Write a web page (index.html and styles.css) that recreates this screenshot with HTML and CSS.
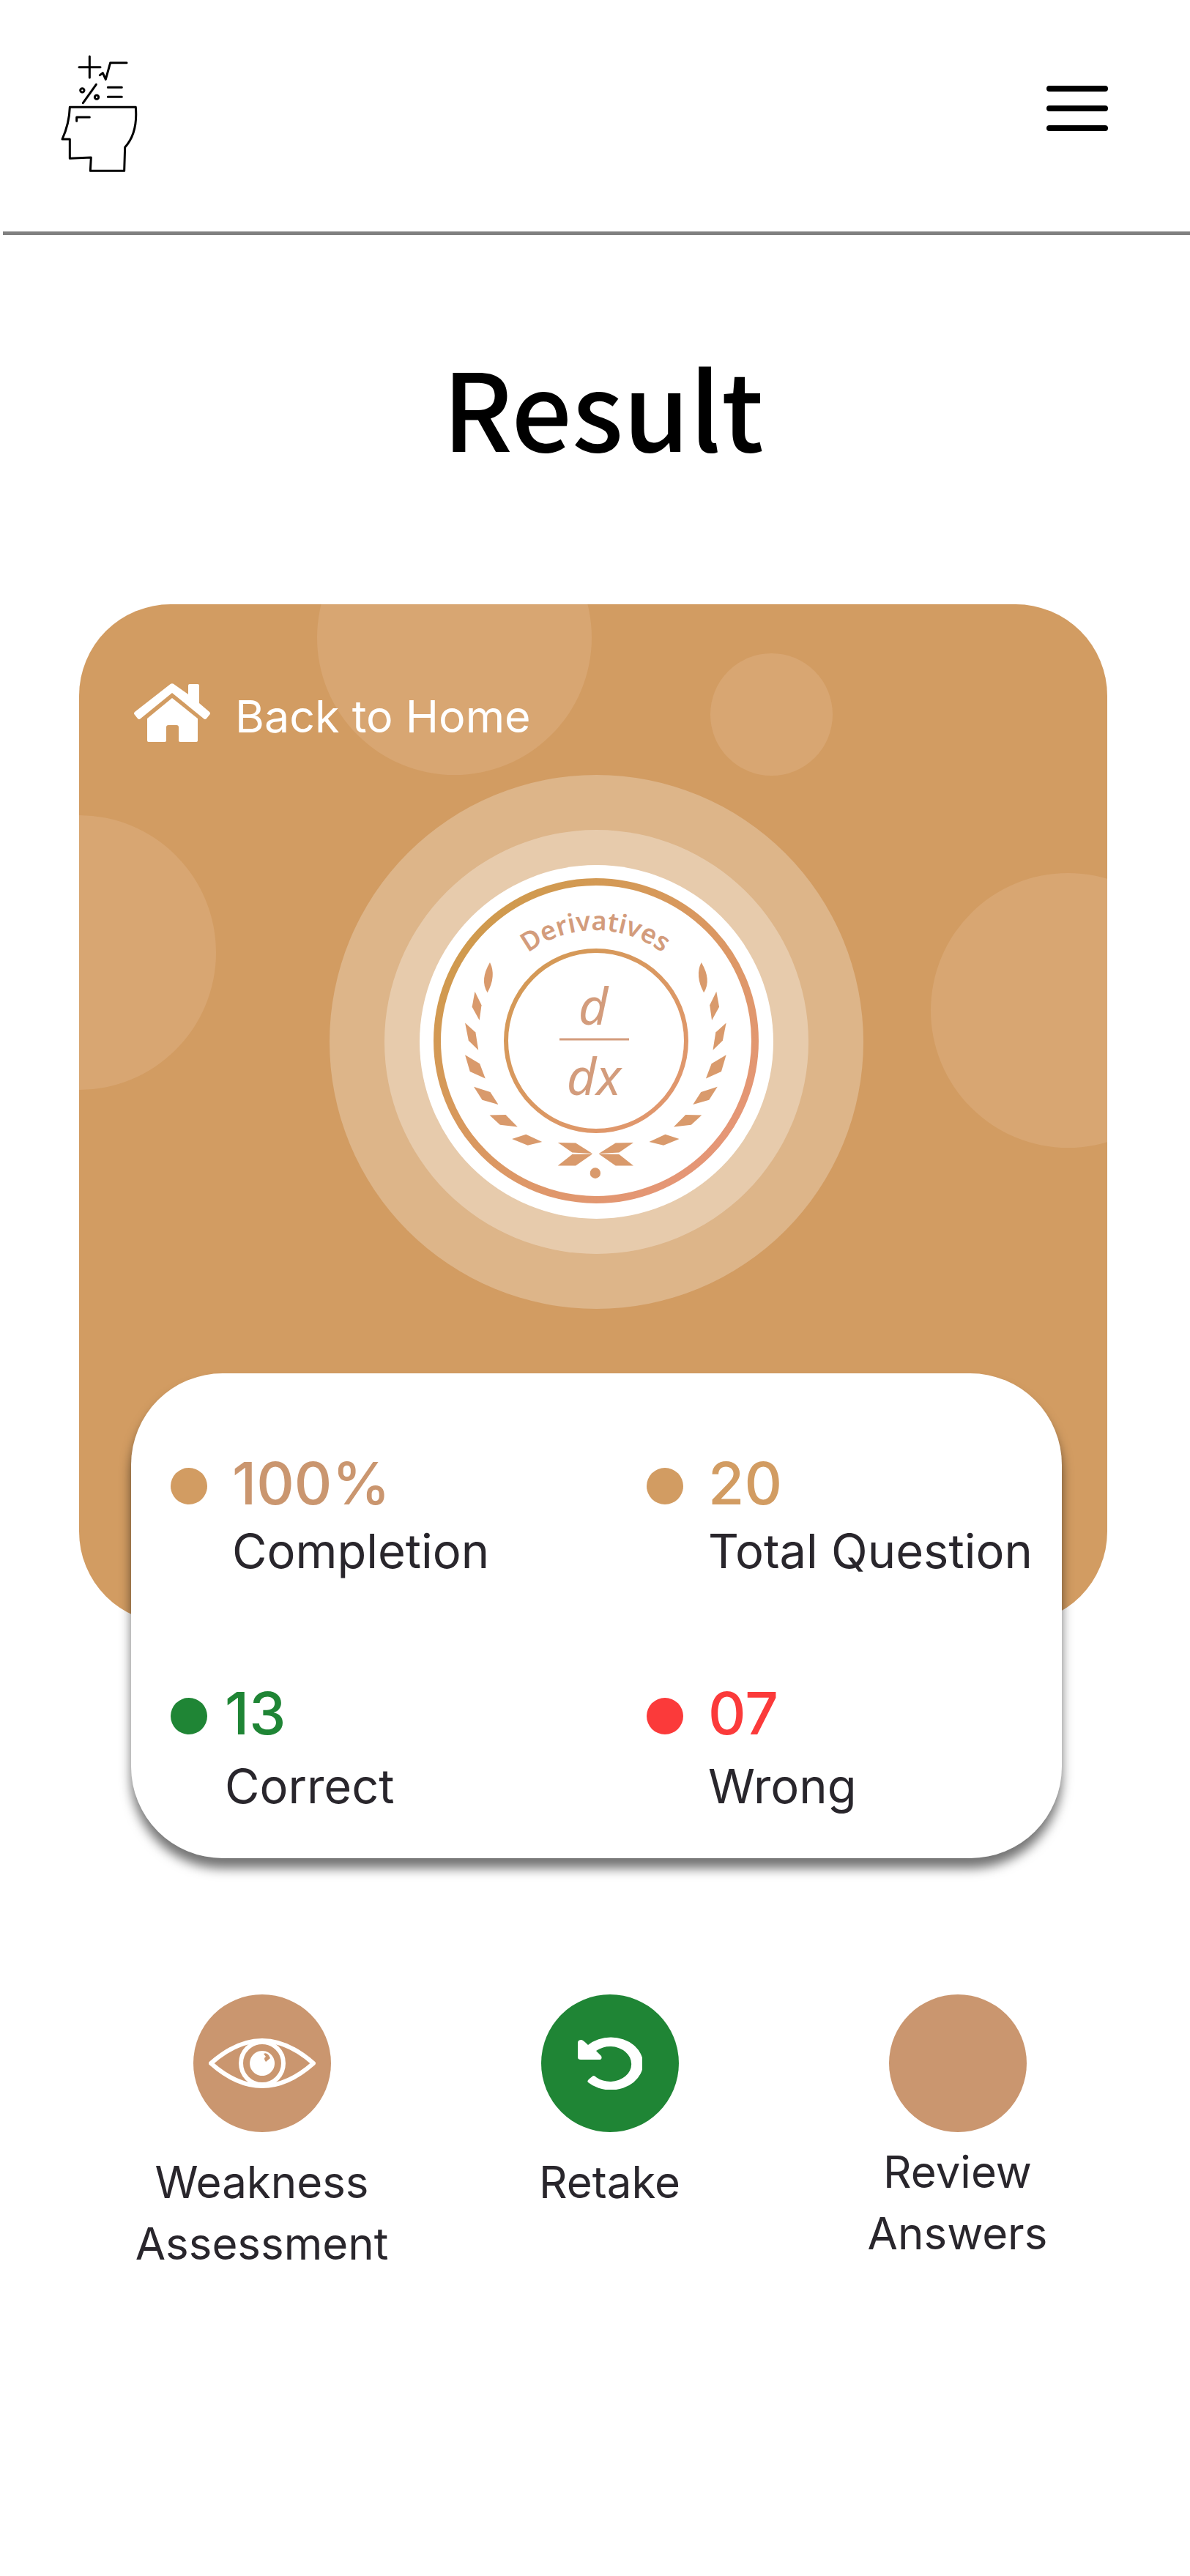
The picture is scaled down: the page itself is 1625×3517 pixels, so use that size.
FILE: index.html
```html
<!DOCTYPE html>
<html lang="en">
<head>
  <meta charset="utf-8">
  <meta name="viewport" content="width=device-width, initial-scale=1">
  <title>Result</title>
  <link rel="stylesheet" href="styles.css">
</head>
<body>
  <header class="topbar">
    <a class="logo" href="#" aria-label="Maths home">
      <svg width="105" height="160" viewBox="70 75 315 480" fill="none" stroke="#000" stroke-width="9" stroke-linecap="round" stroke-linejoin="round" aria-hidden="true">
        <path d="M188 81V168M145 125H232M230 158L242 149L254 175L273 107H340M215 196L161 272M263 208H320M263 247H320"/>
        <circle cx="158" cy="220" r="8"/>
        <circle cx="217" cy="248" r="8"/>
        <path d="M107 289H377Q386 395 333 453L330 550H191L194 495L107 499V420H76Q105 355 107 289Z"/>
        <path d="M135 346V330H188"/>
      </svg>
    </a>
    <button class="menu" type="button" aria-label="Open menu">
      <span class="menu-bar"></span>
      <span class="menu-bar"></span>
      <span class="menu-bar"></span>
    </button>
  </header>

  <main>
    <h1 class="title">Result</h1>

    <section class="summary">
      <div class="backdrop" aria-hidden="true">
        <span class="bubble bubble-top"></span>
        <span class="bubble bubble-small"></span>
        <span class="bubble bubble-left"></span>
        <span class="bubble bubble-right"></span>
      </div>

      <a class="home-link" href="#">
        <svg width="104" height="80" viewBox="0 0 104 80" fill="#fff" aria-hidden="true">
          <path d="M49 1.500Q52 -1 55 1.500L74 15V3Q74 1 76 1H87Q89 1 89 3V27L103 39Q105 41 103 43L99 48Q97 50 95 48L52 13L9 48Q7 50 5 48L1 43Q-1 41 1 39Z"/>
          <path d="M52 20L87 48V78Q87 80 85 80H63Q61 80 61 78V60Q61 57 58 57H47Q44 57 44 60V78Q44 80 42 80H20Q18 80 18 78V48Z"/>
        </svg>
        <span>Back to Home</span>
      </a>

      <div class="ring ring-outer">
        <div class="ring ring-inner">
          <div class="ring ring-core">
            <svg class="badge" viewBox="0 0 483 483" role="img" aria-label="Derivatives badge">
              <defs>
                <linearGradient id="copper" x1="0" y1="0" x2="483" y2="483" gradientUnits="userSpaceOnUse">
                  <stop offset="0.150" stop-color="#cf9a4c"/>
                  <stop offset="0.850" stop-color="#e69678"/>
                </linearGradient>
                <path id="arc" d="M89 240A151 151 0 0 1 391 240"/>
                <g id="laurel">
                  <path d="M477 565Q496 602 470 650Q447 615 477 565Z"/>
                  <path d="M434 647L453 685L447 728L426 690Z"/>
                  <path d="M406 735L436 762L444 812L416 785Z"/>
                  <path d="M406 825L448 850L464 892L420 872Z"/>
                  <path d="M431 915L478 930L501 965L455 952Z"/>
                  <path d="M476 995L522 994L556 1028L506 1022Z"/>
                  <path d="M540 1062L580 1049L626 1070L585 1080Z"/>
                  <path d="M671 1072L722 1073L770 1103L712 1100Z"/>
                  <path d="M671 1137L712 1105L770 1104L722 1137Z"/>
                </g>
              </defs>
              <circle cx="241" cy="240" r="217" fill="none" stroke="url(#copper)" stroke-width="10"/>
              <circle cx="241" cy="240" r="123" fill="none" stroke="url(#copper)" stroke-width="6"/>
              <text class="badge-name" text-anchor="middle"><textPath href="#arc" startOffset="50%">Derivatives</textPath></text>
              <text class="badge-math" x="237" y="218" text-anchor="middle">d</text>
              <path d="M191 238H286" stroke="#d39c7c" stroke-width="3"/>
              <text class="badge-math" x="238" y="314" text-anchor="middle">dx</text>
              <g fill="#d99a6c" transform="translate(-132 -141) scale(.478 .485)">
                <use href="#laurel"/>
                <use href="#laurel" transform="translate(1558 0) scale(-1 1)"/>
                <circle cx="778" cy="1158" r="15"/>
              </g>
            </svg>
          </div>
        </div>
      </div>

      <dl class="stats">
        <div class="stat stat-completion">
          <dd class="value">100%</dd>
          <dt class="label">Completion</dt>
        </div>
        <div class="stat stat-total">
          <dd class="value">20</dd>
          <dt class="label">Total Question</dt>
        </div>
        <div class="stat stat-correct">
          <dd class="value">13</dd>
          <dt class="label">Correct</dt>
        </div>
        <div class="stat stat-wrong">
          <dd class="value">07</dd>
          <dt class="label">Wrong</dt>
        </div>
      </dl>
    </section>

    <nav class="actions" aria-label="Result actions">
      <a class="action" href="#">
        <span class="disc">
          <svg width="146" height="70" viewBox="0 0 146 70" fill="none" stroke="#fff" stroke-width="6" stroke-linejoin="round" aria-hidden="true">
            <path d="M3 35Q38 4 73 4Q108 4 143 35Q108 66 73 66Q38 66 3 35Z"/>
            <ellipse cx="73" cy="35" rx="29" ry="29"/>
            <path d="M75 22Q79 20 82 24L84 28L78 33Q74 28 78 26ZM73 18A17 17 0 1 0 73.100 18Z" fill="#fff" fill-rule="evenodd" stroke="none"/>
          </svg>
        </span>
        <span>Weakness<br>Assessment</span>
      </a>
      <a class="action" href="#">
        <span class="disc disc-green">
          <svg width="88" height="72" viewBox="0 0 88 72" fill="#fff" aria-hidden="true">
            <path d="M0 8Q0 4 5 4Q7 4 14 11A44 36 0 1 1 14 62Q12 60 16 57L21 53Q24 53 25 55A29 24 0 1 0 25 19L32 26Q34 31 29 31H4Q0 31 0 28Z"/>
          </svg>
        </span>
        <span>Retake</span>
      </a>
      <a class="action action-compact" href="#">
        <span class="disc"></span>
        <span>Review<br>Answers</span>
      </a>
    </nav>
  </main>
</body>
</html>
```
FILE: styles.css
```css
* {
  box-sizing: border-box;
}

body {
  margin: 0;
  background: #fff;
  color: #29262c;
  font-family: Inter, "Liberation Sans", sans-serif;
}

a {
  color: inherit;
  text-decoration: none;
}

.topbar {
  display: flex;
  justify-content: space-between;
  align-items: flex-start;
  margin-left: 4px;
  padding: 75px 112px 81px 79px;
  border-bottom: 5px solid #808080;
}

.logo,
.logo svg {
  display: block;
}

.menu {
  display: flex;
  flex-direction: column;
  gap: 19px;
  width: 84px;
  margin: 42px 0 0;
  padding: 0;
  border: 0;
  background: none;
}

.menu-bar {
  height: 8px;
  border-radius: 4px;
  background: #000;
}

.title {
  margin: 133px 0 171px;
  padding-left: 22px;
  color: #000;
  font: 500 146px/200px "Noto Sans CJK KR", "Noto Sans", sans-serif;
  text-align: center;
}

/* Result summary: tinted panel with the stats card hanging over its lower edge */
.summary {
  position: relative;
  display: flex;
  flex-direction: column;
  margin: 0 113px 0 108px;
  padding: 108px 62px 0 71px;
}

.backdrop {
  position: absolute;
  inset: 0 0 321px;
  overflow: hidden;
  border-radius: 125px;
  background: #d29c62;
}

.bubble {
  position: absolute;
  width: 375px;
  height: 375px;
  border-radius: 50%;
  background: #d8a672;
}

.bubble-top {
  top: -142px;
  left: 325px;
}

.bubble-small {
  top: 67px;
  right: 375px;
  width: 167px;
  height: 167px;
}

.bubble-left {
  top: 288px;
  left: -188px;
}

.bubble-right {
  top: 367px;
  right: -134px;
}

.home-link {
  position: relative;
  display: flex;
  align-items: flex-end;
  align-self: flex-start;
  gap: 34px;
  padding-left: 4px;
  color: #fff;
  font-size: 61px;
  line-height: 70px;
}

.ring {
  display: flex;
  align-items: center;
  justify-content: center;
  border-radius: 50%;
}

.ring-outer {
  position: relative;
  align-self: center;
  width: 729px;
  height: 729px;
  margin: 45px 0 88px;
  background: rgba(255, 255, 255, 0.25);
}

.ring-inner {
  width: 579px;
  height: 579px;
  background: rgba(255, 255, 255, 0.3);
}

.ring-core {
  width: 483px;
  height: 483px;
  background: #fff;
}

.badge {
  width: 100%;
}

.badge-name {
  fill: #d39c7c;
  font: 600 36px "Noto Sans", sans-serif;
}

.badge-math {
  fill: #d39c7c;
  font: italic 400 70px "Noto Sans", sans-serif;
}

.stats {
  position: relative;
  display: grid;
  grid-template-columns: 11fr 9fr;
  row-gap: 141px;
  margin: 0;
  padding: 110px 35px 58px 54px;
  border-radius: 125px;
  background: #fff;
  box-shadow: 0 14px 15px rgba(0, 0, 0, 0.55);
}

.stat {
  display: grid;
  grid-template-columns: 50px auto;
  justify-content: start;
  gap: 13px 34px;
  color: #d29c62;
}

.stat::before {
  content: "";
  align-self: center;
  height: 50px;
  margin-top: 8px;
  border-radius: 50%;
  background: currentColor;
}

.stat-completion .value {
  color: #ca966f;
}

.stat-correct {
  gap: 20px 24px;
  color: #1f8535;
}

.stat-wrong {
  row-gap: 20px;
  color: #fb3a3a;
}

.value {
  margin: 0;
  font-size: 80px;
  font-weight: 500;
  line-height: 80px;
}

.label {
  grid-column: 2;
  color: #29262c;
  font-size: 65px;
  line-height: 80px;
  white-space: nowrap;
}

.actions {
  display: grid;
  grid-template-columns: repeat(3, 1fr);
  align-items: start;
  padding: 186px 80px 420px 120px;
}

.action {
  display: flex;
  flex-direction: column;
  align-items: center;
  gap: 26px;
  font-size: 60px;
  line-height: 84px;
  text-align: center;
}

.action-compact {
  gap: 12px;
}

.disc {
  display: flex;
  align-items: center;
  justify-content: center;
  width: 188px;
  height: 188px;
  border-radius: 50%;
  background: #ca966f;
}

.disc-green {
  background: #1f8535;
}
```
